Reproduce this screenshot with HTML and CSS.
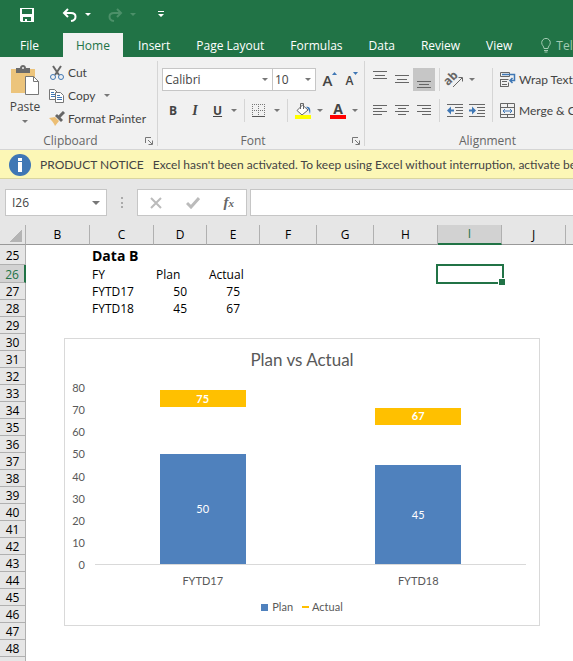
FILE: index.html
```html
<!DOCTYPE html>
<html lang="en">
<head>
    <meta charset="UTF-8">
    <meta name="viewport" content="width=device-width, initial-scale=1.0">
    <title>Plan vs Actual</title>
    <link rel="stylesheet" href="styles.css">
</head>
<body>

<header class="top">
    <div class="quick-access">
        <button class="qa-save" aria-label="Save">
            <svg width="14" height="14" viewBox="0 0 14 14"><path fill="#fff" fill-rule="evenodd" d="M0 0h14v14H1l-1-1zM2 1v5h10V1zM3 9v4h2v-2h2v2h4V9z"/></svg>
        </button>
        <button class="qa-undo" aria-label="Undo">
            <svg width="16" height="14" viewBox="0 0 16 14"><path fill="none" stroke="#fff" stroke-width="2" d="M6 1L2 5l4 4M2 5h7c6 0 6 7 0 8"/></svg>
        </button>
        <button class="qa-arrow" aria-label="Undo list"><i class="arrow"></i></button>
        <button class="qa-redo" aria-label="Redo">
            <svg width="16" height="14" viewBox="0 0 16 14"><path fill="none" stroke="#4c9069" stroke-width="2" d="M10 1l4 4-4 4M14 5H7c-6 0-6 7 0 8"/></svg>
        </button>
        <button class="qa-arrow dim" aria-label="Redo list"><i class="arrow"></i></button>
        <button class="qa-more" aria-label="Customize toolbar">
            <svg width="6" height="7" viewBox="0 0 6 7"><path fill="#fff" d="M0 0h6v1H0zM0 3h6L3 6z"/></svg>
        </button>
    </div>
    <nav class="tabs">
        <a class="file" href="#">File</a>
        <a class="active" href="#">Home</a>
        <a href="#">Insert</a>
        <a href="#">Page Layout</a>
        <a href="#">Formulas</a>
        <a href="#">Data</a>
        <a href="#">Review</a>
        <a href="#">View</a>
        <a class="tell" href="#">
            <svg width="10" height="15" viewBox="0 0 10 15"><path fill="none" stroke="#a3cbb3" d="M3 10.500C3 8 .7 7.500.7 4.700a4.300 4.300 0 0 1 8.600 0C9.300 7.500 7 8 7 10.500z"/><path stroke="#a3cbb3" d="M3 12.500h4M3.500 14h3"/></svg>
            Tell me
        </a>
    </nav>
</header>

<div class="ribbon">
    <section class="group clipboard">
        <div class="group-body">
            <button class="paste">
                <svg width="28" height="30" viewBox="0 0 28 30">
                    <path fill="#ecc47c" d="M0 4h24v24H0z"/>
                    <path fill="#6b6b6b" d="M5 3h4c0-4 6-4 6 0h4v5H5z"/>
                    <circle cx="12" cy="3" r="1" fill="#f1f1f1"/>
                    <path fill="#fff" stroke="#777" d="M14.500 11.500h8l5 5v13h-13z"/>
                    <path fill="none" stroke="#777" d="M22.500 11.500v5h5"/>
                </svg>
                <span>Paste</span>
                <i class="arrow"></i>
            </button>
            <div class="clip-list">
                <button>
                    <svg width="16" height="16" viewBox="0 0 16 16"><path stroke="#666" stroke-width="2" d="M4 1l6 9M12 1L6 10"/><circle cx="4" cy="12" r="2.500" fill="none" stroke="#3f77b5"/><circle cx="12" cy="12" r="2.500" fill="none" stroke="#3f77b5"/></svg>
                    Cut
                </button>
                <button>
                    <svg width="16" height="16" viewBox="0 0 16 16"><path fill="#fff" stroke="#777" d="M.5 1.500h5l3 3v7h-8z"/><path stroke="#3f77b5" d="M2 4.500h3M2 6.500h4M2 8.500h4"/><path fill="#fff" stroke="#777" d="M6.500 4.500h5l3 3v7h-8z"/><path stroke="#3f77b5" d="M8 7.500h3M8 9.500h5M8 11.500h5"/></svg>
                    Copy <i class="arrow"></i>
                </button>
                <button>
                    <svg width="16" height="16" viewBox="0 0 16 16"><path fill="#ecbe74" d="M0 7l6-1 4 4-4 5c-1-3-3-5-6-8z"/><path fill="#666" d="M6 5l2-2 6 6-2 2z"/><path stroke="#666" stroke-width="3" d="M10 6l5-5"/></svg>
                    Format Painter
                </button>
            </div>
        </div>
        <footer><span>Clipboard</span><button class="launcher" aria-label="Clipboard options"><svg width="8" height="8" viewBox="0 0 8 8"><path fill="none" stroke="#777" d="M.5 6V.5H6M3 3l4 4M7.500 3.500v4h-4"/></svg></button></footer>
    </section>

    <section class="group font">
        <div class="group-rows">
            <div class="tools">
                <label class="combo name"><select aria-label="Font name"><option>Calibri</option></select><i class="arrow"></i></label>
                <label class="combo size"><select aria-label="Font size"><option>10</option></select><i class="arrow"></i></label>
                <button class="tool grow" aria-label="Increase font size"><b>A</b><svg width="5" height="3" viewBox="0 0 5 3"><path fill="#3f77b5" d="M0 3h5L2.500 0z"/></svg></button>
                <button class="tool shrink" aria-label="Decrease font size"><b>A</b><svg width="5" height="3" viewBox="0 0 5 3"><path fill="#3f77b5" d="M0 0h5L2.500 3z"/></svg></button>
            </div>
            <div class="tools">
                <button class="tool letter bold">B</button>
                <button class="tool letter italic">I</button>
                <button class="tool split letter underline"><u>U</u><i class="arrow"></i></button>
                <span class="sep"></span>
                <button class="tool split" aria-label="Borders">
                    <svg width="14" height="14" viewBox="0 0 14 14"><path fill="none" stroke="#777" stroke-dasharray="1 1" d="M0 .5h13M.5 0v12M6.500 0v12M12.500 0v12M0 6.500h13"/><path stroke="#555" d="M0 12.500h13"/></svg>
                    <i class="arrow"></i>
                </button>
                <span class="sep"></span>
                <button class="tool split" aria-label="Fill color">
                    <svg width="16" height="16" viewBox="0 0 16 16"><path fill="#fff" stroke="#666" d="M7.500 2L13 7l-6 5-5-4.500z"/><path fill="none" stroke="#666" d="M5.500 6V.5h3V6"/><path fill="#3f77b5" d="M11 4c4-1 5 3 4 7-1-3-1-5-4-7z"/><path fill="#ff0" d="M0 12h16v4H0z"/></svg>
                    <i class="arrow"></i>
                </button>
                <button class="tool split font-color" aria-label="Font color"><b>A</b><i class="arrow"></i></button>
            </div>
        </div>
        <footer><span>Font</span><button class="launcher" aria-label="Font options"><svg width="8" height="8" viewBox="0 0 8 8"><path fill="none" stroke="#777" d="M.5 6V.5H6M3 3l4 4M7.500 3.500v4h-4"/></svg></button></footer>
    </section>

    <section class="group alignment">
        <div class="align-body">
            <div class="group-rows">
                <div class="tools">
                    <button class="tool" aria-label="Top align"><svg width="14" height="18" viewBox="0 0 14 18"><path stroke="#666" d="M0 .5h14M2 4.500h10M0 7.500h14"/></svg></button>
                    <button class="tool" aria-label="Middle align"><svg width="14" height="18" viewBox="0 0 14 18"><path stroke="#666" d="M0 4.500h14M2 8.500h10M0 11.500h14"/></svg></button>
                    <button class="tool pressed" aria-label="Bottom align"><svg width="14" height="18" viewBox="0 0 14 18"><path stroke="#666" d="M0 10.500h14M2 13.500h10M0 16.500h14"/></svg></button>
                    <span class="sep"></span>
                    <button class="tool split" aria-label="Orientation">
                        <svg class="orient" width="17" height="16" viewBox="0 0 17 16"><text x="-2" y="9" transform="rotate(-45 6 8)">ab</text><path fill="none" stroke="#666" d="M6 15l9-9M11.500 5.500h4v4"/></svg>
                        <i class="arrow"></i>
                    </button>
                </div>
                <div class="tools">
                    <button class="tool" aria-label="Align left"><svg width="14" height="12" viewBox="0 0 14 12"><path stroke="#666" d="M0 .5h14M0 3.500h9M0 6.500h14M0 9.500h9"/></svg></button>
                    <button class="tool" aria-label="Center"><svg width="14" height="12" viewBox="0 0 14 12"><path stroke="#666" d="M0 .5h14M3 3.500h8M0 6.500h14M3 9.500h8"/></svg></button>
                    <button class="tool" aria-label="Align right"><svg width="14" height="12" viewBox="0 0 14 12"><path stroke="#666" d="M0 .5h14M5 3.500h9M0 6.500h14M5 9.500h9"/></svg></button>
                    <span class="sep"></span>
                    <button class="tool" aria-label="Decrease indent"><svg width="16" height="14" viewBox="0 0 16 14"><path stroke="#666" d="M0 .5h16M8 3.500h8M9 6.500h7M8 9.500h8M0 12.500h16"/><path fill="#3f77b5" d="M0 6.500l4-4v3h3v2H4v3z"/></svg></button>
                    <button class="tool" aria-label="Increase indent"><svg width="16" height="14" viewBox="0 0 16 14"><path stroke="#666" d="M0 .5h16M8 3.500h8M9 6.500h7M8 9.500h8M0 12.500h16"/><path fill="#3f77b5" d="M7 6.500l-4-4v3H0v2h3v3z"/></svg></button>
                </div>
            </div>
            <div class="wrap-list">
                <button>
                    <svg width="16" height="16" viewBox="0 0 16 16"><path fill="none" stroke="#666" d="M.5.500h9v4h-9zM.5 7.500h8M.5 7v8M.5 14.500h8v-4M2 9.500h5M2 12.500h5"/><path fill="none" stroke="#3f77b5" stroke-width="1.500" d="M2 2.500h12.500v6H10M12.500 6L10 8.500l2.500 2.500"/></svg>
                    Wrap Text
                </button>
                <button>
                    <svg width="16" height="16" viewBox="0 0 16 16"><path fill="none" stroke="#666" d="M.5.500h14v14H.5zM.5 4.500h14M.5 11.500h14M7.500 0v4M7.500 11v4"/><path fill="none" stroke="#3f77b5" d="M3 8h9M5 6L3 8l2 2M10 6l2 2-2 2"/></svg>
                    Merge &amp; Center
                </button>
            </div>
        </div>
        <footer><span>Alignment</span></footer>
    </section>
</div>

<div class="notice">
    <svg width="22" height="22" viewBox="0 0 22 22"><circle cx="11" cy="11" r="11" fill="#3f77b5"/><path fill="#fff" d="M9 4h4v3H9zM9 8h4v10H9z"/></svg>
    <span>PRODUCT NOTICE</span>
    <span>Excel hasn't been activated. To keep using Excel without interruption, activate before</span>
</div>

<div class="formula-bar">
    <div class="name-box">
        <input type="text" value="I26" aria-label="Name box">
        <i class="arrow big"></i>
    </div>
    <span class="dots"></span>
    <div class="formula-buttons">
        <button aria-label="Cancel"><svg width="12" height="12" viewBox="0 0 12 12"><path stroke="#bbb" stroke-width="2" d="M1 1l10 10M11 1L1 11"/></svg></button>
        <button aria-label="Enter"><svg width="14" height="12" viewBox="0 0 14 12"><path fill="none" stroke="#bbb" stroke-width="3" d="M1 6l4 4 8-9"/></svg></button>
        <button class="fx" aria-label="Insert function">f<sub>x</sub></button>
    </div>
    <input class="formula" type="text" aria-label="Formula">
</div>

<main class="sheet">
    <table>
        <colgroup>
            <col class="c-head"><col class="c-wide"><col class="c-wide"><col class="c-narrow"><col class="c-narrow"><col class="c-mid"><col class="c-mid"><col class="c-wide"><col class="c-wide"><col class="c-wide"><col>
        </colgroup>
        <thead>
            <tr>
                <th class="corner"></th><th>B</th><th>C</th><th>D</th><th>E</th><th>F</th><th>G</th><th>H</th><th class="current">I</th><th>J</th><th></th>
            </tr>
        </thead>
        <tbody>
            <tr class="r25"><th>25</th><td></td><td class="title" colspan="2">Data B</td><td colspan="7"></td></tr>
            <tr class="r26"><th class="current">26</th><td></td><td>FY</td><td>Plan</td><td>Actual</td><td></td><td></td><td></td><td class="selected"><span class="cursor"></span></td><td></td><td></td></tr>
            <tr><th>27</th><td></td><td>FYTD17</td><td class="num">50</td><td class="num">75</td><td colspan="6"></td></tr>
            <tr><th>28</th><td></td><td>FYTD18</td><td class="num">45</td><td class="num">67</td><td colspan="6"></td></tr>
            <tr><th>29</th><td colspan="10"></td></tr>
            <tr><th>30</th><td colspan="10"></td></tr>
            <tr><th>31</th><td colspan="10"></td></tr>
            <tr><th>32</th><td colspan="10"></td></tr>
            <tr><th>33</th><td colspan="10"></td></tr>
            <tr><th>34</th><td colspan="10"></td></tr>
            <tr><th>35</th><td colspan="10"></td></tr>
            <tr><th>36</th><td colspan="10"></td></tr>
            <tr><th>37</th><td colspan="10"></td></tr>
            <tr><th>38</th><td colspan="10"></td></tr>
            <tr><th>39</th><td colspan="10"></td></tr>
            <tr><th>40</th><td colspan="10"></td></tr>
            <tr><th>41</th><td colspan="10"></td></tr>
            <tr><th>42</th><td colspan="10"></td></tr>
            <tr><th>43</th><td colspan="10"></td></tr>
            <tr><th>44</th><td colspan="10"></td></tr>
            <tr><th>45</th><td colspan="10"></td></tr>
            <tr><th>46</th><td colspan="10"></td></tr>
            <tr><th>47</th><td colspan="10"></td></tr>
            <tr><th>48</th><td colspan="10"></td></tr>
            <tr><th></th><td colspan="10"></td></tr>
        </tbody>
    </table>

    <!-- chart floats over the cells -->
    <div class="chart">
        <h2>Plan vs Actual</h2>
        <div class="chart-body">
            <div class="y-axis">
                <span>80</span><span>70</span><span>60</span><span>50</span><span>40</span><span>30</span><span>20</span><span>10</span><span>0</span>
            </div>
            <div class="plot">
                <div class="category">
                    <div class="bar" style="height: 62.5%">50</div>
                    <div class="mark" style="bottom: 93.75%">75</div>
                </div>
                <div class="category">
                    <div class="bar" style="height: 56.25%">45</div>
                    <div class="mark" style="bottom: 83.75%">67</div>
                </div>
            </div>
        </div>
        <div class="x-axis"><span>FYTD17</span><span>FYTD18</span></div>
        <div class="legend"><i class="key-plan"></i>Plan<i class="key-actual"></i>Actual</div>
    </div>
</main>

</body>
</html>
```
FILE: styles.css
```css
* {
    box-sizing: border-box;
}
body {
    margin: 0;
    height: 100vh;
    overflow: hidden;
    font-family: "Open Sans", "Noto Sans", sans-serif;
    font-size: 12px;
    line-height: 16px;
    color: #444;
    background-color: #fff;
}
button {
    display: flex;
    align-items: center;
    padding: 0;
    border: 0;
    background: none;
    font: inherit;
    color: inherit;
    white-space: nowrap;
}
svg {
    display: block;
    flex: none;
}
input, select {
    border: 0;
    padding: 0;
    font: inherit;
    color: inherit;
    background: none;
    appearance: none;
}
.arrow {
    flex: none;
    border: 3px solid transparent;
    border-top-color: #777;
    border-bottom: 0;
}
.arrow.big {
    border-width: 4px 4px 0;
}

/* title bar and tabs */
.top {
    background-color: #217346;
    color: #fff;
}
.quick-access {
    display: flex;
    align-items: center;
    height: 33px;
    padding: 0 0 4px 20px;
}
.quick-access .arrow {
    border-top-color: #fff;
}
.quick-access .dim .arrow {
    border-top-color: #4c9069;
}
.qa-undo {
    margin-left: 28px;
}
.qa-redo {
    margin-left: 16px;
}
.qa-arrow {
    margin-left: 7px;
}
.qa-more {
    margin-left: 22px;
}
.tabs {
    display: flex;
    height: 24px;
    overflow: hidden;
}
.tabs a {
    flex: none;
    padding: 0 13px;
    line-height: 25px;
    color: #fff;
    text-decoration: none;
    white-space: nowrap;
}
.tabs .file {
    width: 63px;
    padding-left: 20px;
}
.tabs .active {
    margin-right: 2px;
    background-color: #f1f1f1;
    color: #217346;
}
.tabs .tell {
    display: flex;
    align-items: center;
    gap: 5px;
    padding-left: 16px;
    color: #a3cbb3;
}

/* ribbon */
.ribbon {
    display: flex;
    height: 93px;
    padding: 4px 0 3px;
    overflow: hidden;
    background-color: #f1f1f1;
    border-bottom: 1px solid #d5d5d5;
}
.group {
    display: flex;
    flex: none;
    flex-direction: column;
    justify-content: space-between;
    border-right: 1px solid #d5d5d5;
}
.group footer {
    display: flex;
    align-items: center;
    line-height: 10px;
    color: #666;
}
.group footer span {
    flex: 1;
    text-align: center;
}
.launcher {
    margin: 0 4px 0 -12px;
}
.clipboard {
    width: 158px;
}
.clipboard footer span, .font footer span {
    padding-right: 16px;
}
.font {
    width: 207px;
}
.alignment {
    width: 246px;
}
.group-body {
    display: flex;
    padding-left: 8px;
}
.paste {
    flex-direction: column;
    width: 34px;
    padding-top: 4px;
}
.paste span {
    margin: 4px 0 5px;
}
.clip-list {
    display: flex;
    flex-direction: column;
    margin-left: 7px;
}
.clip-list button, .wrap-list button {
    gap: 3px;
    height: 23px;
    font-family: Lato, "Open Sans", sans-serif;
}
.clip-list .arrow {
    margin-left: 6px;
}
.group-rows {
    display: flex;
    flex-direction: column;
    gap: 8px;
    padding: 7px 0 0 4px;
}
.tools {
    display: flex;
    height: 23px;
}
.tool {
    justify-content: center;
    width: 22px;
}
.tool.pressed {
    background-color: #c6c6c6;
}
.tool.split {
    justify-content: space-between;
    width: 35px;
    padding: 0 4px 0 3px;
}
.sep {
    width: 1px;
    margin: 0 4px 0 3px;
    background-color: #d5d5d5;
}
.combo {
    display: flex;
    align-items: center;
    padding: 0 4px 0 2px;
    border: 1px solid #c6c6c6;
    background-color: #fff;
}
.combo select {
    flex: 1;
    min-width: 0;
}
.combo.name {
    width: 111px;
}
.combo.size {
    width: 44px;
    margin-left: -1px;
}
.grow, .shrink {
    align-items: flex-start;
    margin-left: 3px;
}
.shrink {
    margin-left: 0;
}
.grow svg, .shrink svg {
    margin-top: 4px;
}
.grow b {
    font-size: 15px;
    font-weight: 600;
    line-height: 24px;
}
.shrink b {
    font-size: 12px;
    font-weight: 600;
    line-height: 26px;
}
.letter {
    font-size: 12px;
    font-weight: 700;
}
.italic {
    font-family: "Liberation Serif", serif;
    font-size: 14px;
    font-style: italic;
}
.tool.underline {
    padding-left: 7px;
}
.tool.font-color b {
    width: 16px;
    height: 16px;
    border-bottom: 4px solid #f00;
    font-size: 14px;
    line-height: 12px;
    text-align: center;
}
.orient {
    overflow: visible;
    font-size: 12px;
    font-weight: 700;
    fill: #666;
}
.align-body {
    display: flex;
}
.alignment .sep {
    margin: 0 4px;
}
.wrap-list {
    display: flex;
    flex-direction: column;
    gap: 8px;
    margin: 7px 0 0 4px;
    padding-left: 7px;
    border-left: 1px solid #d5d5d5;
}

/* activation message */
.notice {
    display: flex;
    align-items: center;
    height: 29px;
    padding: 1px 0 0 9px;
    overflow: hidden;
    white-space: nowrap;
    font-family: Lato, "Open Sans", sans-serif;
    color: #444;
    background-color: #fcf7b6;
    border-bottom: 1px solid #d9d5a0;
}
.notice span {
    margin-left: 9px;
}

/* formula bar */
.formula-bar {
    display: flex;
    height: 46px;
    padding: 10px 0 9px 5px;
    background-color: #e6e6e6;
}
.name-box {
    display: flex;
    align-items: center;
    width: 102px;
    padding: 0 6px;
    border: 1px solid #c6c6c6;
    background-color: #fff;
}
.name-box input {
    flex: 1;
    min-width: 0;
}
.dots {
    height: 11px;
    margin: 8px 14px;
    border-left: 2px dotted #aaa;
}
.formula-buttons {
    display: flex;
    align-items: center;
    justify-content: space-between;
    width: 110px;
    padding: 0 12px;
    border: 1px solid #c6c6c6;
    background-color: #fff;
}
.fx {
    align-items: baseline;
    font-family: "Liberation Serif", serif;
    font-size: 15px;
    font-style: italic;
    font-weight: 700;
    color: #666;
}
.fx sub {
    font-size: 11px;
}
.formula {
    flex: 1;
    min-width: 0;
    margin-left: 3px;
    border: 1px solid #c6c6c6;
    border-right: 0;
    background-color: #fff;
}

/* grid */
.sheet {
    position: relative;
    overflow: hidden;
}
table {
    width: 100%;
    min-width: 630px;
    table-layout: fixed;
    border-spacing: 0;
    color: #000;
}
.c-head {
    width: 26px;
}
.c-wide {
    width: 64px;
}
.c-mid {
    width: 57px;
}
.c-narrow {
    width: 53px;
}
th {
    padding: 2px 0 0;
    font-weight: 400;
    background-color: #e6e6e6;
    border-right: 1px solid #b0b0b0;
    border-bottom: 1px solid #b0b0b0;
}
thead th {
    height: 20px;
    padding: 0;
    border-bottom-color: #999;
}
thead .current {
    color: #217346;
    background-color: #d2d2d2;
    border-bottom: 2px solid #217346;
}
tbody .current {
    color: #217346;
    background-color: #d2d2d2;
    border-right: 2px solid #217346;
}
.corner {
    background: linear-gradient(135deg, #e6e6e6 50%, #b4b4b4 50%) 10px 5px / 12px 12px no-repeat #e6e6e6;
}
tbody tr {
    height: 17px;
    line-height: 14px;
}
.r25 {
    height: 20px;
}
.r26 {
    height: 18px;
}
td {
    padding: 1px 2px 0;
}
.title {
    padding-top: 2px;
    font-size: 14px;
    font-weight: 700;
}
.num {
    padding-right: 20px;
    text-align: right;
}
.selected {
    position: relative;
}
.cursor {
    position: absolute;
    inset: -1px -2px;
    border: 2px solid #217346;
}
.cursor::after {
    content: "";
    position: absolute;
    right: -3px;
    bottom: -3px;
    width: 6px;
    height: 6px;
    border: 1px solid #fff;
    border-width: 1px 0 0 1px;
    background-color: #217346;
}

/* chart */
.chart {
    position: absolute;
    top: 113px;
    left: 64px;
    width: 476px;
    padding: 10px 0;
    border: 1px solid #d9d9d9;
    background-color: #fff;
    font-family: Lato, "Open Sans", sans-serif;
    font-size: 11px;
    color: #595959;
}
.chart h2 {
    margin: 0;
    font-size: 17px;
    font-weight: 400;
    line-height: 22px;
    text-align: center;
}
.chart-body {
    display: flex;
    gap: 10px;
    padding: 9px 13px 0 7px;
}
.y-axis {
    display: flex;
    flex-direction: column;
    justify-content: space-between;
    width: 13px;
    text-align: right;
}
.plot {
    display: flex;
    flex: 1;
    height: 177px;
    margin: 8px 0;
    border-bottom: 1px solid #d9d9d9;
}
.category {
    position: relative;
    display: flex;
    flex: 1;
    align-items: flex-end;
    justify-content: center;
}
.bar, .mark {
    display: flex;
    align-items: center;
    justify-content: center;
    width: 40%;
    color: #fff;
}
.bar {
    background-color: #4f81bd;
}
.mark {
    position: absolute;
    height: 17px;
    margin-bottom: -8px;
    background-color: #ffc000;
    font-weight: 700;
}
.x-axis {
    display: flex;
    padding: 0 13px 0 30px;
}
.x-axis span {
    flex: 1;
    text-align: center;
}
.legend {
    display: flex;
    align-items: center;
    justify-content: center;
    margin-top: 10px;
}
.key-plan {
    width: 7px;
    height: 7px;
    margin-right: 4px;
    background-color: #4f81bd;
}
.key-actual {
    width: 7px;
    height: 2px;
    margin: 0 3px 0 9px;
    background-color: #ffc000;
}
```
